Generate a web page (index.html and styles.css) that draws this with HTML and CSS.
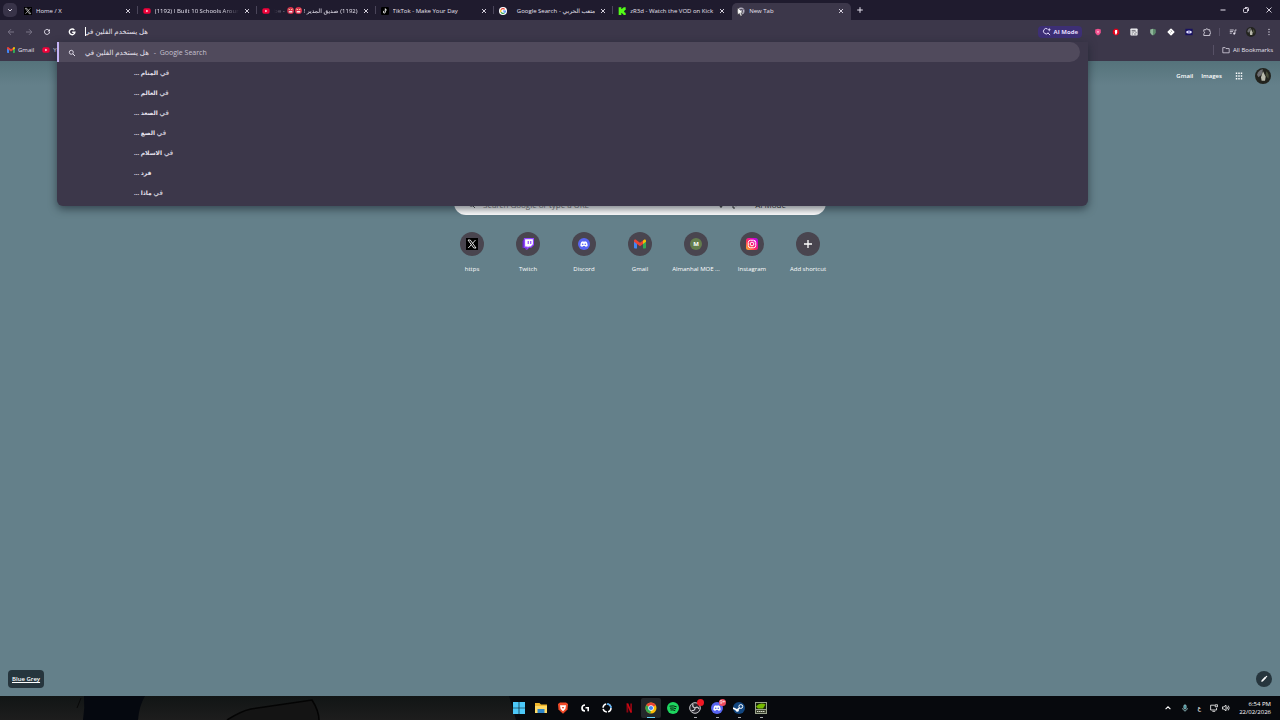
FILE: index.html
```html
<!DOCTYPE html>
<html lang="en">
<head>
    <meta charset="UTF-8">
    <meta name="viewport" content="width=device-width, initial-scale=1.0">
    <title>New Tab</title>
    <link rel="stylesheet" href="styles.css">
</head>
<body>
    <svg width="0" height="0" class="defs" aria-hidden="true">
        <symbol id="close" viewBox="0 0 8 8"><path d="M2 2l4 4M6 2l-4 4" stroke="currentColor" stroke-width="0.9" fill="none"/></symbol>
        <symbol id="youtube" viewBox="0 0 24 24"><rect x="1" y="4" width="22" height="16" rx="5" fill="#f0023a"/><path d="M10 8.500l6 3.500-6 3.500z" fill="#fff"/></symbol>
        <symbol id="x-logo" viewBox="0 0 24 24"><rect width="24" height="24" fill="#000"/><path d="M4 4h4.500l11.500 16h-4.500z" fill="none" stroke="#fff" stroke-width="1.700"/><path d="M19 4l-6.500 7.200M10.800 13.200L4.500 20" stroke="#fff" stroke-width="1.700"/></symbol>
        <symbol id="gmail" viewBox="0 0 24 18"><path d="M0 3v13q0 2 2 2h4V6z" fill="#4285f4"/><path d="M24 3v13q0 2-2 2h-4V6z" fill="#34a853"/><path d="M18 2v7l6-4.500V3c0-3-3-3.500-4.600-2z" fill="#fbbc04"/><path d="M0 3c0-3 3-3.500 4.600-2L12 6.500 18 2v7l-6 4.500L0 4.500z" fill="#ea4335"/></symbol>
        <symbol id="discord" viewBox="0 0 24 24"><circle cx="12" cy="12" r="12" fill="#5865f2"/><path d="M6.500 8q2-1.500 4-1.700l.6 1h1.800l.6-1q2 .2 4 1.700 2 4 1.800 8-2 1.500-4 1.800l-1-1.700H9.700l-1 1.700q-2-.3-4-1.800-.2-4 1.800-8z" fill="#fff"/><circle cx="9.400" cy="12.500" r="1.600" fill="#5865f2"/><circle cx="14.600" cy="12.500" r="1.600" fill="#5865f2"/></symbol>
        <symbol id="chrome" viewBox="0 0 24 24"><circle cx="12" cy="12" r="11" fill="#fbbc04"/><path d="M12 12L2.500 6.500A11 11 0 0 1 21.500 6.500z" fill="#ea4335"/><path d="M12 12L2.500 6.500A11 11 0 0 0 11 23z" fill="#34a853"/><circle cx="12" cy="12" r="5.500" fill="#fff"/><circle cx="12" cy="12" r="4.200" fill="#4285f4"/></symbol>
        <symbol id="avatar" viewBox="0 0 24 24"><circle cx="12" cy="12" r="12" fill="#23241f"/><path d="M3 10q2-7 9-8l-2 8-5 4z" fill="#6c6c70"/><path d="M12 5l4 8-1 6h-5l-1-5z" fill="#b9b9ac"/><path d="M17 5q5 4 3 11l-4-5z" fill="#4b4f3c"/></symbol>
    </svg>

    <header class="tab-strip">
        <button class="tab-search" aria-label="Search tabs"><svg viewBox="0 0 8 8"><path d="M2.200 3.200L4 5l1.800-1.800" fill="none" stroke="currentColor" stroke-width="1"/></svg></button>
        <nav class="tabs">
            <div class="tab">
                <svg class="favicon"><use href="#x-logo"/></svg>
                <a href="#" class="title">Home / X</a>
                <button class="close" aria-label="Close"><svg><use href="#close"/></svg></button>
            </div>
            <div class="tab">
                <svg class="favicon"><use href="#youtube"/></svg>
                <a href="#" class="title fade">(1192) I Built 10 Schools Around</a>
                <button class="close" aria-label="Close"><svg><use href="#close"/></svg></button>
            </div>
            <div class="tab">
                <svg class="favicon"><use href="#youtube"/></svg>
                <a href="#" class="title rtl fade" dir="rtl"><bdi>(1192)</bdi> <span>صديق المدير !</span><span class="emoji"><svg viewBox="0 0 8 8"><circle cx="4" cy="4" r="4" fill="#d92f4c"/><path d="M1.500 2.300l2 .8M6.500 2.300l-2 .8" stroke="#ffd9a0" stroke-width="1"/><path d="M2 5.500h4" stroke="#fff" stroke-width="1.500"/></svg><svg viewBox="0 0 8 8"><circle cx="4" cy="4" r="4" fill="#d92f4c"/><path d="M1.500 2.300l2 .8M6.500 2.300l-2 .8" stroke="#ffd9a0" stroke-width="1"/><path d="M2 5.500h4" stroke="#fff" stroke-width="1.500"/></svg></span><bdi dir="ltr">be -</bdi></a>
                <button class="close" aria-label="Close"><svg><use href="#close"/></svg></button>
            </div>
            <div class="tab">
                <svg class="favicon" viewBox="0 0 24 24"><rect width="24" height="24" rx="4" fill="#000"/><path d="M13 5v10a3 3 0 1 1-3-3M13 5q.5 4 4.500 4.500" fill="none" stroke="#fff" stroke-width="2.600"/></svg>
                <a href="#" class="title">TikTok - Make Your Day</a>
                <button class="close" aria-label="Close"><svg><use href="#close"/></svg></button>
            </div>
            <div class="tab">
                <svg class="favicon" viewBox="0 0 24 24"><circle cx="12" cy="12" r="12" fill="#fff"/><g fill="none" stroke-width="3.500"><path d="M6 8.500A7 7 0 0 1 17 7" stroke="#ea4335"/><path d="M6 8.500a7 7 0 0 0 0 7" stroke="#fbbc04"/><path d="M6 15.500A7 7 0 0 0 16.500 17.500" stroke="#34a853"/><path d="M16.500 17.500A7 7 0 0 0 19 12h-7" stroke="#4285f4"/></g></svg>
                <a href="#" class="title rtl" dir="rtl">متعب الحربي - <bdi>Google Search</bdi></a>
                <button class="close" aria-label="Close"><svg><use href="#close"/></svg></button>
            </div>
            <div class="tab">
                <svg class="favicon" viewBox="0 0 24 24"><path d="M2 1h8v5h3V3h3V1h7v8h-3v3h-2v2h2v3h3v7h-7v-3h-3v-3h-3v6H2z" fill="#53fc18"/></svg>
                <a href="#" class="title">zR3d - Watch the VOD on Kick</a>
                <button class="close" aria-label="Close"><svg><use href="#close"/></svg></button>
            </div>
            <div class="tab active">
                <svg class="favicon" viewBox="0 0 24 24"><circle cx="12" cy="12" r="10.500" fill="#b9b5c5"/><circle cx="12" cy="12" r="5" fill="#b9b5c5" stroke="#3c374a" stroke-width="2"/><path d="M12 7h9M7.700 14.500L3.500 7M16.300 14.500L12 22" stroke="#3c374a" stroke-width="1.600"/></svg>
                <a href="#" class="title">New Tab</a>
                <button class="close" aria-label="Close"><svg><use href="#close"/></svg></button>
                <svg class="cursor" viewBox="0 0 10 14"><path d="M1 1v10l2.500-2.200L5.200 13l2-1-1.800-3.800H9z" fill="#fff" stroke="#222" stroke-width="0.600"/></svg>
            </div>
        </nav>
        <button class="new-tab" aria-label="New tab"><svg viewBox="0 0 8 8"><path d="M4 1.200v5.600M1.200 4h5.600" stroke="currentColor" stroke-width="1"/></svg></button>
        <div class="window-buttons">
            <button aria-label="Minimize"><svg viewBox="0 0 8 8"><path d="M1.500 4h5" stroke="currentColor"/></svg></button>
            <button aria-label="Restore"><svg viewBox="0 0 8 8"><rect x="1.500" y="2.500" width="4" height="4" rx="1" fill="none" stroke="currentColor" stroke-width="0.900"/><path d="M3 1.500h2.500q1 0 1 1V5" fill="none" stroke="currentColor" stroke-width="0.900"/></svg></button>
            <button aria-label="Close window"><svg viewBox="0 0 8 8"><path d="M1.500 1.500l5 5M6.500 1.500l-5 5" stroke="currentColor" stroke-width="0.900"/></svg></button>
        </div>
    </header>

    <div class="chrome">
        <div class="nav-buttons">
            <button class="dim" aria-label="Back"><svg viewBox="0 0 8 8"><path d="M7 4H1.500M4 1.200L1.200 4 4 6.800" fill="none" stroke="currentColor" stroke-width="0.900"/></svg></button>
            <button class="dim" aria-label="Forward"><svg viewBox="0 0 8 8"><path d="M1 4h5.500M4 1.200L6.800 4 4 6.800" fill="none" stroke="currentColor" stroke-width="0.900"/></svg></button>
            <button aria-label="Reload"><svg viewBox="0 0 8 8"><path d="M6.500 4A2.500 2.500 0 1 1 5.800 2.200L6.600 3" fill="none" stroke="currentColor" stroke-width="1"/><path d="M7 1v2.500H4.500z" fill="currentColor"/></svg></button>
        </div>
        <div class="address">
            <div class="address-bar">
                <svg class="lead-icon" viewBox="0 0 8 8"><path d="M6.300 2.100A2.800 2.800 0 1 0 6.900 4.200H4.200" fill="none" stroke="#fff" stroke-width="1.400"/></svg>
                <input class="address-input" type="text" dir="rtl" aria-label="Address and search bar" value="هل يستخدم الفلين في">
                <button class="ai-mode"><svg viewBox="0 0 10 10"><path d="M6 2A3 3 0 1 0 7 6.500M6.500 6.500L9 9" fill="none" stroke="currentColor" stroke-width="1.100"/><path d="M8 .8l.6 1.600 1.600.6-1.600.6L8 5.200l-.6-1.600L5.800 3l1.600-.6z" fill="currentColor"/></svg>AI Mode</button>
            </div>
            <ul class="suggestions">
                <li class="selected"><a href="#"><svg class="lead-icon" viewBox="0 0 8 8"><circle cx="3.300" cy="3.300" r="2" fill="none" stroke="currentColor" stroke-width="0.900"/><path d="M4.800 4.800L7 7" stroke="currentColor"/></svg><bdi>هل يستخدم الفلين في</bdi><span class="source">-&nbsp; Google Search</span></a></li>
                <li><a href="#" dir="rtl">في <b>المنام ...</b></a></li>
                <li><a href="#" dir="rtl">في <b>العالم ...</b></a></li>
                <li><a href="#" dir="rtl">في <b>الصعد ...</b></a></li>
                <li><a href="#" dir="rtl">في <b>الصع ...</b></a></li>
                <li><a href="#" dir="rtl">في <b>الاسلام ...</b></a></li>
                <li><a href="#" dir="rtl"><b>فرد ...</b></a></li>
                <li><a href="#" dir="rtl">في <b>ماذا ...</b></a></li>
            </ul>
        </div>
        <div class="extensions">
            <button aria-label="Shield"><svg viewBox="0 0 10 10"><path d="M1.500 2L5 1l3.500 1v3.500Q8 8 5 9.500 2 8 1.500 5.500z" fill="#f0508e"/><path d="M3.500 4h3L5 7z" fill="#ffc2d8"/></svg></button>
            <button aria-label="Ad blocker"><svg viewBox="0 0 10 10"><path d="M3.300 1h3.400L9 3.300v3.400L6.700 9H3.300L1 6.700V3.300z" fill="#e4001b"/><path d="M3.500 4.500l.5-2h2.500v3L5.500 8H4.200z" fill="#fff"/></svg></button>
            <button aria-label="Reader"><svg viewBox="0 0 10 10"><rect x=".5" y=".5" width="9" height="9" rx="1" fill="#efeff2"/><path d="M2 3h5M2 5h3M5.500 4.500l3 1M2 7.500h2M5 7.500h3" stroke="#44434e" stroke-width="0.900"/></svg></button>
            <button aria-label="Privacy"><svg viewBox="0 0 10 10"><path d="M1.500 2L5 1v8.500Q2 8 1.500 5.500z" fill="#8fb69a"/><path d="M8.500 2L5 1v8.500Q8 8 8.500 5.500z" fill="#5e8a6c"/></svg></button>
            <button aria-label="Extension"><svg viewBox="0 0 10 10"><path d="M5 1.500L8.500 5 5 8.500 1.500 5z" fill="#fff" stroke="#fff" stroke-width="1.800" stroke-linejoin="round"/><path d="M5 3l1 2M4 6h1" stroke="#777" stroke-width="0.800"/></svg></button>
            <button aria-label="Viewer"><svg viewBox="0 0 10 10"><rect x=".5" y="1" width="9" height="8" fill="#171060"/><ellipse cx="5" cy="5" rx="3.600" ry="2" fill="#e6e4ff"/><circle cx="5" cy="5" r="1" fill="#4138ac"/></svg></button>
            <button aria-label="Extensions"><svg viewBox="0 0 10 10"><path d="M1 2.200h2.500a1.300 1.300 0 0 1 2.600 0h2.400v2.300a1.300 1.300 0 0 1 0 2.600v2.300H1V7a1.300 1.300 0 0 0 0-2.500z" fill="none" stroke="currentColor" stroke-width="1"/></svg></button>
            <span class="divider"></span>
            <button aria-label="Media controls"><svg viewBox="0 0 10 10"><path d="M1 2.500h5M1 4.500h4M1 6.500h2.500M7.500 7V2.500h2" fill="none" stroke="currentColor"/><circle cx="6.500" cy="7" r="1.300" fill="currentColor"/></svg></button>
            <button class="profile" aria-label="Profile"><svg><use href="#avatar"/></svg></button>
            <button aria-label="Menu"><svg viewBox="0 0 10 10"><circle cx="5" cy="1.800" r=".8" fill="currentColor"/><circle cx="5" cy="5" r=".8" fill="currentColor"/><circle cx="5" cy="8.200" r=".8" fill="currentColor"/></svg></button>
        </div>
    </div>

    <nav class="bookmarks">
        <a href="#"><svg><use href="#gmail"/></svg>Gmail</a>
        <a href="#"><svg><use href="#youtube"/></svg>YouTube</a>
        <a href="#" class="all"><svg viewBox="0 0 10 10"><path d="M1 2h3l1 1.200h4V8.500H1z" fill="none" stroke="currentColor" stroke-width="0.900"/></svg>All Bookmarks</a>
    </nav>

    <main class="page">
        <div class="page-top">
            <a href="#">Gmail</a>
            <a href="#">Images</a>
            <button class="apps" aria-label="Google apps"><svg viewBox="0 0 10 10"><path d="M1 1.500h8M1 5h8M1 8.500h8" stroke="#fff" stroke-width="1.800" stroke-dasharray="1.800 1.300"/></svg></button>
            <button class="account" aria-label="Account"><svg><use href="#avatar"/></svg></button>
        </div>
        <form class="search-box">
            <svg viewBox="0 0 8 8"><circle cx="3.300" cy="3.300" r="2" fill="none" stroke="#555" stroke-width="0.900"/><path d="M4.800 4.800L7 7" stroke="#555"/></svg>
            <input type="text" placeholder="Search Google or type a URL" aria-label="Search Google">
            <svg viewBox="0 0 8 8"><path d="M4 1v3M2 3.500a2 2 0 0 0 4 0M4 5.500V7" fill="none" stroke="#333"/></svg>
            <svg viewBox="0 0 8 8"><path d="M1 3V1h2M5 1h2v2M1 5v2h2" fill="none" stroke="#333"/><circle cx="4" cy="4" r="1.200" fill="#333"/></svg>
            <button type="button">AI Mode</button>
        </form>
        <nav class="shortcuts">
            <a href="#"><span class="tile"><svg><use href="#x-logo"/></svg></span>https</a>
            <a href="#"><span class="tile"><svg viewBox="0 0 24 24"><path d="M1 6l4-5h4v19l-3 4v-4H1z" fill="#6b2bd0"/><path d="M5 1h18v12l-5 5h-4l-4 4v-4H5z" fill="#fff" stroke="#9146ff" stroke-width="2.500"/><path d="M12.500 6v6M17.500 6v6" stroke="#9146ff" stroke-width="2.400"/></svg></span>Twitch</a>
            <a href="#"><span class="tile"><svg><use href="#discord"/></svg></span>Discord</a>
            <a href="#"><span class="tile"><svg><use href="#gmail"/></svg></span>Gmail</a>
            <a href="#"><span class="tile"><span class="letter">M</span></span><span>Almanhal MOE ...</span></a>
            <a href="#"><span class="tile"><svg viewBox="0 0 24 24"><defs><linearGradient id="insta" x1="0" y1="1" x2="1" y2="0"><stop offset="0" stop-color="#ffc228"/><stop offset=".4" stop-color="#ff3058"/><stop offset=".75" stop-color="#e000c0"/><stop offset="1" stop-color="#8a20f0"/></linearGradient></defs><rect width="24" height="24" rx="5" fill="url(#insta)"/><rect x="4.500" y="4.500" width="15" height="15" rx="4.500" fill="none" stroke="#fff" stroke-width="2"/><circle cx="12" cy="12" r="3.700" fill="none" stroke="#fff" stroke-width="2"/><circle cx="16.500" cy="7.500" r="1.200" fill="#fff"/></svg></span>Instagram</a>
            <a href="#"><span class="tile"><svg viewBox="0 0 12 12"><path d="M6 2v8M2 6h8" stroke="#fff" stroke-width="1.300"/></svg></span>Add shortcut</a>
        </nav>
        <div class="page-bottom">
            <a href="#" class="theme-name">Blue Grey</a>
            <button class="customize" aria-label="Customize Chrome"><svg viewBox="0 0 10 10"><path d="M1.500 8.500l.5-2L6.500 2 8 3.500 3.500 8zM7 1.500l1-.7 1.200 1.200-.7 1z" fill="#fff"/></svg></button>
        </div>
    </main>

    <footer class="taskbar">
        <svg class="wallpaper" viewBox="0 0 516 24" aria-hidden="true"><defs><linearGradient id="floor" x1="0" y1="0" x2="0" y2="1"><stop offset="0" stop-color="#111515"/><stop offset="1" stop-color="#1d1d1d"/></linearGradient></defs><path d="M0 0h509l7 24H0z" fill="url(#floor)"/><path d="M84 0h61q-6 10-7 24H83q2-12 1-24z" fill="#05080f"/><path d="M81 2l-4 10" stroke="#080808"/><path d="M227 24q14-9 24-11l61-9q7 11 7 20" fill="#141414" stroke="#040404" stroke-width="1.500"/></svg>
        <nav class="apps-row">
            <a href="#" aria-label="Start"><svg viewBox="0 0 12 12"><path d="M0 0h5.700v5.700H0zM6.300 0H12v5.700H6.300zM0 6.300h5.700V12H0zM6.300 6.300H12V12H6.300z" fill="#4cc8f8"/></svg></a>
            <a href="#" aria-label="File Explorer"><svg viewBox="0 0 12 12"><path d="M0 1h4.500L6 2.500h6v8.500H0z" fill="#f2b62c"/><path d="M0 4h12v7H0z" fill="#ffd965"/><path d="M2.500 7h7v4h-7z" fill="#2f86c9"/></svg></a>
            <a href="#" aria-label="Brave"><svg viewBox="0 0 12 12"><path d="M3 .5h6l2 1.500-.5 5.500L6 11.800 1.500 7.500 1 2z" fill="#f04a28"/><path d="M3 3.200h6L8.300 7 6 9.200 3.700 7z" fill="#fff"/><path d="M4.800 5h2.400L6 7z" fill="#f04a28"/></svg></a>
            <a href="#" aria-label="Logitech G HUB"><svg viewBox="0 0 12 12"><path d="M6 3A3 3 0 1 0 6 9" fill="none" stroke="#fff" stroke-width="1.700"/><path d="M6.500 5.700h2.700v3.500" fill="none" stroke="#fff" stroke-width="1.600"/></svg></a>
            <a href="#" aria-label="Sync"><svg viewBox="0 0 12 12"><circle cx="6" cy="6" r="4" fill="none" stroke="#fff" stroke-width="1.500" stroke-dasharray="5 1.280"/><path d="M6 2A4 4 0 0 1 10 6" fill="none" stroke="#49a8f5" stroke-width="1.500"/></svg></a>
            <a href="#" aria-label="Netflix"><svg viewBox="0 0 12 12"><path d="M3.500 1.500h1.800v9H3.500zM7.200 1.500H9v9H7.200z" fill="#8a0612"/><path d="M3.500 1.500h1.800L9 10.500H7.200z" fill="#c90813"/></svg></a>
            <a href="#" class="current" aria-label="Chrome"><svg><use href="#chrome"/></svg></a>
            <a href="#" aria-label="Spotify"><svg viewBox="0 0 12 12"><circle cx="6" cy="6" r="6" fill="#1ed760"/><path d="M2.500 4.200q4-1 7.200.7M3 6.200q3.400-.8 6 .6M3.500 8q2.500-.6 4.700.6" fill="none" stroke="#06200e" stroke-width="1"/></svg></a>
            <a href="#" class="open" aria-label="OBS Studio"><svg viewBox="0 0 12 12"><circle cx="6" cy="6" r="5.300" fill="#25242b" stroke="#cfcfd3" stroke-width="1"/><path d="M6 6q-3-1-2-4M6 6q3-2 4 1M6 6q0 3-3.500 2.500" fill="none" stroke="#cfcfd3" stroke-width="1.200"/></svg><span class="badge"></span></a>
            <a href="#" class="open" aria-label="Discord"><svg><use href="#discord"/></svg><span class="badge soft">9+</span></a>
            <a href="#" class="open" aria-label="Steam"><svg viewBox="0 0 12 12"><circle cx="6" cy="6" r="6" fill="#12467f"/><circle cx="7.800" cy="4.500" r="1.900" fill="none" stroke="#fff" stroke-width="1"/><path d="M0 6l4 2 2.500-2" fill="none" stroke="#fff" stroke-width="1.600"/><circle cx="4.300" cy="8.300" r="1.500" fill="#fff"/></svg></a>
            <a href="#" class="open" aria-label="Graphics"><svg viewBox="0 0 12 12"><path d="M0 0h12v12H0z" fill="#9aa38c"/><path d="M1 1h10v6H1z" fill="#18220c"/><path d="M1 4.500q4-4.500 9.500-2L8 6.500H3z" fill="#76b900"/><path d="M1 8h10v3H1z" fill="#3b402f"/><path d="M2 9.500h8" stroke="#d7dccb" stroke-dasharray="1.500 .5"/></svg></a>
        </nav>
        <div class="tray">
            <button aria-label="Hidden icons"><svg viewBox="0 0 10 10"><path d="M2 6.500l3-3 3 3" fill="none" stroke="#fff" stroke-width="1.300"/></svg></button>
            <button class="mic" aria-label="Microphone"><svg viewBox="0 0 10 10"><rect x="3.500" y="1" width="3" height="5" rx="1.500" fill="#3f8f99" stroke="#bfe3e6" stroke-width="0.700"/><path d="M2 5a3 3 0 0 0 6 0M5 8v1.500" fill="none" stroke="#9fd0d4" stroke-width="0.900"/></svg></button>
            <button class="lang">ع</button>
            <button class="network" aria-label="Network"><svg viewBox="0 0 10 10"><path d="M6 1.500H.8v6h7.400V5M3 9.200h3.500M6.500 1h3v2.500h-3z" fill="none" stroke="#fff" stroke-width="1"/></svg><svg viewBox="0 0 10 10"><path d="M.6 3.600h1.700L5 1.500v7L2.300 6.400H.6z" fill="none" stroke="#fff" stroke-width="1"/><path d="M6.300 3.300q1 1.700 0 3.400M7.800 2q2.400 3 0 6" fill="none" stroke="#fff" stroke-width="1"/></svg></button>
            <time class="clock"><span>6:54 PM</span><span>22/02/2026</span></time>
        </div>
    </footer>
</body>
</html>
```
FILE: styles.css
```css
* {
    box-sizing: border-box;
}
body {
    margin: 0;
    min-height: 100vh;
    display: flex;
    flex-direction: column;
    background: #64808a;
    color: #e6e2ee;
    font: 6px/10px "Open Sans", "Noto Sans", "DejaVu Sans", sans-serif;
}
a {
    color: inherit;
    text-decoration: none;
}
button, input {
    font: inherit;
    color: inherit;
    background: none;
    border: none;
    padding: 0;
    outline: none;
}
button {
    display: flex;
    align-items: center;
    justify-content: center;
}
svg {
    display: block;
    width: 8px;
    height: 8px;
    flex: none;
}
.defs {
    position: absolute;
    width: 0;
    height: 0;
}

/* tab strip */
.tab-strip {
    display: flex;
    height: 20px;
    background: #1f1b2e;
}
.tab-search {
    width: 14px;
    height: 14px;
    margin: 3px 2px 3px 3px;
    border-radius: 5px;
    background: #383348;
}
.tabs {
    display: flex;
    flex: 0 1 832px;
    min-width: 0;
}
.tab {
    display: flex;
    align-items: center;
    flex: 1;
    min-width: 0;
    gap: 4px;
    padding: 1px 6px 0 5px;
    background: linear-gradient(#4a455a, #4a455a) right 6px / 1px 8px no-repeat;
}
.tab:nth-last-child(2) {
    background: none;
}
.tab.active {
    position: relative;
    margin-top: 3px;
    padding-bottom: 3px;
    border-radius: 5px 5px 0 0;
    background: #3c374a;
}
.title {
    flex: 1;
    min-width: 0;
    overflow: hidden;
    white-space: nowrap;
}
.title.rtl {
    display: flex;
    align-items: center;
    gap: 2px;
}
.title.fade {
    mask-image: linear-gradient(to right, #000 80%, transparent);
}
.title.rtl.fade {
    mask-image: linear-gradient(to left, #000 80%, transparent);
}
.emoji {
    display: flex;
    gap: 1px;
}
.emoji svg {
    width: 7px;
    height: 7px;
}
.cursor {
    position: absolute;
    left: 5px;
    top: 4px;
    width: 7px;
    height: 10px;
}
.new-tab {
    width: 18px;
}
.window-buttons {
    display: flex;
    margin-left: auto;
}
.window-buttons button {
    width: 23px;
}

/* toolbar */
.chrome {
    display: flex;
    height: 22px;
    background: #3c374a;
}
.nav-buttons {
    display: flex;
    width: 57px;
    padding: 1px 0 0 2px;
}
.nav-buttons button {
    width: 18px;
}
.dim {
    color: #807b8d;
}
.address {
    position: relative;
    flex: 1;
}
.address-bar {
    display: flex;
    align-items: center;
    height: 22px;
    padding: 1px 6px 0 11px;
    font-size: 7px;
}
.lead-icon {
    margin-right: 9px;
}
.address-input {
    width: 63px;
    border-left: 1px solid #fff;
    height: 9px;
}
.ai-mode {
    gap: 3px;
    height: 12px;
    margin-left: auto;
    padding: 0 4px;
    border-radius: 4px;
    background: #3d2f75;
    font-size: 6px;
    font-weight: 700;
    color: #e4dcff;
}
.ai-mode svg {
    width: 9px;
    height: 9px;
}
.suggestions {
    position: absolute;
    z-index: 2;
    top: 22px;
    left: 0;
    right: 0;
    margin: 0;
    padding: 0 0 4px;
    list-style: none;
    font-size: 7px;
    background: #3c374a;
    border-radius: 0 0 6px 6px;
    box-shadow: 0 3px 8px rgba(20, 30, 40, 0.6);
}
.suggestions li {
    display: flex;
    align-items: center;
    height: 20px;
    padding: 1px 0 0 77px;
}
.suggestions .selected {
    margin-right: 8px;
    padding-left: 9px;
    border-left: 2px solid #c4b3f5;
    border-radius: 0 10px 10px 0;
    background: #504a5c;
}
.suggestions b {
    font-size: 6px;
}
.selected a {
    display: flex;
    align-items: center;
}
.source {
    margin-left: 5px;
    color: #c6c1d0;
}
.extensions {
    display: flex;
    align-items: center;
    justify-content: space-between;
    width: 192px;
    padding: 1px 5px 0 4px;
}
.extensions button {
    width: 12px;
    height: 12px;
}
.extensions .profile svg {
    width: 10px;
    height: 10px;
}
.divider {
    width: 1px;
    height: 8px;
    background: #575166;
}

/* bookmarks */
.bookmarks {
    display: flex;
    align-items: center;
    gap: 8px;
    height: 19px;
    padding: 0 7px 3px;
    background: #3c374a;
}
.bookmarks a {
    display: flex;
    align-items: center;
    gap: 3px;
}
.bookmarks .all {
    margin-left: auto;
    padding-left: 8px;
    border-left: 1px solid #575166;
}

/* new tab page */
.page {
    display: flex;
    flex-direction: column;
    flex: 1;
    background: linear-gradient(#55737b, #64808a 24px);
}
.page-top {
    display: flex;
    align-items: center;
    justify-content: flex-end;
    gap: 8px;
    padding: 7px 9px;
    color: #fff;
    font-weight: 600;
}
.apps {
    margin: 0 4px 0 5px;
}
.account svg {
    width: 16px;
    height: 16px;
}
.search-box {
    display: flex;
    align-items: center;
    gap: 7px;
    width: 372px;
    height: 24px;
    margin: 100px auto 0;
    padding: 3px 14px 0;
    border-radius: 12px;
    background: #fff;
    color: #333;
    font-size: 8px;
}
.search-box input {
    flex: 1;
}
.search-box button {
    margin: 0 26px 0 8px;
}
.shortcuts {
    display: flex;
    justify-content: center;
    margin-top: 17px;
    color: #fff;
}
.shortcuts a {
    display: flex;
    flex-direction: column;
    align-items: center;
    gap: 8px;
    width: 56px;
    white-space: nowrap;
}
.tile {
    display: flex;
    align-items: center;
    justify-content: center;
    width: 24px;
    height: 24px;
    border-radius: 50%;
    background: #49454f;
}
.tile svg {
    width: 12px;
    height: 12px;
}
.letter {
    width: 12px;
    border-radius: 50%;
    background: #647d4d;
    font-weight: 700;
    line-height: 12px;
    text-align: center;
}
.page-bottom {
    display: flex;
    align-items: center;
    justify-content: space-between;
    margin-top: auto;
    padding: 0 8px 8px;
    color: #fff;
}
.theme-name {
    padding: 4px;
    border-radius: 4px;
    background: #26353d;
    font-weight: 600;
    text-decoration: underline;
}
.customize {
    width: 16px;
    height: 16px;
    border-radius: 50%;
    background: #26353d;
}

/* taskbar */
.taskbar {
    display: grid;
    grid-template-columns: 1fr auto 1fr;
    height: 24px;
    background: #07090d;
    color: #fff;
}
.wallpaper {
    grid-area: 1 / 1 / 2 / 3;
    width: 516px;
    height: 24px;
}
.apps-row {
    grid-area: 1 / 2;
    display: flex;
    align-items: center;
    gap: 2px;
}
.apps-row a {
    position: relative;
    display: flex;
    align-items: center;
    justify-content: center;
    width: 20px;
    height: 20px;
    border-radius: 2px;
}
.apps-row svg {
    width: 12px;
    height: 12px;
}
.apps-row .current {
    background: #24272b;
}
.open::after, .current::after {
    content: "";
    position: absolute;
    bottom: 0;
    width: 3px;
    height: 1px;
    background: #a7a9ad;
}
.current::after {
    width: 8px;
    background: #67cdf5;
}
.badge {
    position: absolute;
    top: 1px;
    right: 1px;
    width: 7px;
    height: 7px;
    border-radius: 50%;
    background: #f01824;
    font-size: 5px;
    line-height: 7px;
    text-align: center;
}
.badge.soft {
    background: #ec4a60;
}
.tray {
    grid-area: 1 / 3;
    display: flex;
    align-items: center;
    justify-content: flex-end;
    gap: 9px;
    padding-right: 9px;
}
.network {
    gap: 4px;
}
.clock {
    display: flex;
    flex-direction: column;
    line-height: 8px;
    text-align: right;
}
```
